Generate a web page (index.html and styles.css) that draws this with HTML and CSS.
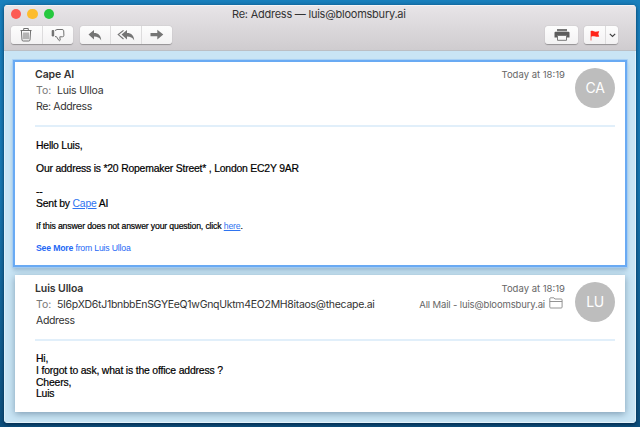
FILE: index.html
```html
<!DOCTYPE html>
<html lang="en">
<head>
<meta charset="utf-8">
<title>Re: Address</title>
<link rel="stylesheet" href="styles.css">
</head>
<body>
<main class="window">
  <header class="titlebar">
    <div class="title-row">
      <div class="lights"><i class="light red"></i><i class="light yellow"></i><i class="light green"></i></div>
      <h1 class="title"><span>Re: Address — luis@bloomsbury.ai</span></h1>
    </div>
    <div class="toolbar">
      <div class="group trash-group">
        <button aria-label="Delete"><svg width="14" height="16" viewBox="0 0 14 16" fill="none" stroke="#707070" stroke-width="1"><path d="M1.5 3.5h11M4.7 3.2V1.500h4.600v1.700M2.400 3.700l.6 9.200q.1 1.100 1.200 1.100h5.600q1.100 0 1.200-1.100l.6-9.200M5 5.500v6.700M7 5.500v6.700M9 5.500v6.700"/></svg></button>
        <button aria-label="Junk"><svg width="14" height="14" viewBox="0 0 14 14" fill="none" stroke="#707070"><path d="M1.200 2.500h1.500v5.500H1.200z" fill="#555"/><path d="M4 2.500l2-1h5q1.500 0 1.700 1.200l.2 4.600q0 1.500-1.500 1.500H8.800l.4 3.400q-.5 1-1.400.1L5.400 8.600H4"/></svg></button>
      </div>
      <div class="group reply-group">
        <button aria-label="Reply"><svg width="14" height="13" viewBox="0 0 14 13" fill="#757575"><path d="M.5 5.600L6 1v3c4.500 0 7 2.600 7.200 7.500C11.500 8.700 9.500 7.600 6 7.600v2.900z"/></svg></button>
        <button aria-label="Reply all"><svg width="18" height="13" viewBox="0 0 18 13" fill="#757575"><path d="M4.500 5.600L10 1v3c4.500 0 7 2.600 7.200 7.500C15.500 8.700 13.500 7.600 10 7.600v2.900z"/><path d="M6.500 1.400L1.300 5.600l5.200 4.400" fill="none" stroke="#757575" stroke-width="1.200"/></svg></button>
        <button aria-label="Forward"><svg width="14" height="12" viewBox="0 0 14 12" fill="#757575"><path d="M.5 4h6.800V.8l6 4.800-6 4.800V7.200H.5z"/></svg></button>
      </div>
      <div class="group print-group">
        <button aria-label="Print"><svg width="16" height="14" viewBox="0 0 16 14"><path d="M3 1h10v2.200H3z" fill="#777"/><path d="M1.500 3.800h13q1 0 1 1v4.700H.5V4.800q0-1 1-1z" fill="#5c5c5c"/><path d="M3.500 7.500h9v4.800h-9z" fill="#f8f8f8" stroke="#777"/></svg></button>
      </div>
      <div class="group flag-group">
        <button aria-label="Flag"><svg width="10" height="11" viewBox="0 0 10 11"><path d="M1 1v9.500" stroke="#f5665e"/><path d="M1 1c2-1 3 .8 4.500.7S8 1 9.200 1.200L8.300 4l.9 2.500c-1.500.7-2.700.2-4 0S2.500 6 1 6.800z" fill="#ff2419"/></svg></button>
        <button aria-label="Flag options"><svg width="7" height="5" viewBox="0 0 7 5" fill="none" stroke="#444" stroke-width="1.200"><path d="M.8.8l2.700 2.700L6.200.8"/></svg></button>
      </div>
    </div>
  </header>
  <section class="messages">
    <article class="message selected">
      <div class="head">
        <div class="who">
          <p class="name"><span>Cape AI</span></p>
          <p><span class="label">To:</span><span class="to1">Luis Ulloa</span></p>
          <p><span class="subj">Re: Address</span></p>
        </div>
        <div class="meta"><p><span class="time">Today at 18:19</span></p></div>
        <div class="avatar">CA</div>
      </div>
      <div class="body">
        <p>Hello Luis,</p><br>
        <p>Our address is *20 Ropemaker Street* , London EC2Y 9AR</p><br>
        <p>--</p>
        <p>Sent by <a href="#">Cape</a> AI</p>
        <p class="small"><span>If this answer does not answer your question, click <a href="#">here</a>.</span></p>
        <p class="more"><b>See More</b> from Luis Ulloa</p>
      </div>
    </article>
    <article class="message second">
      <div class="head">
        <div class="who">
          <p class="name"><span>Luis Ulloa</span></p>
          <p><span class="label">To:</span><span class="to2">5I6pXD6tJ1bnbbEnSGYEeQ1wGnqUktm4EO2MH8itaos@thecape.ai</span></p>
          <p><span class="subj">Address</span></p>
        </div>
        <div class="meta">
          <p><span class="time">Today at 18:19</span></p>
          <p class="mailbox"><span>All Mail - luis@bloomsbury.ai</span><svg width="14" height="12" viewBox="0 0 14 12" fill="none" stroke="#888" stroke-width=".9"><path d="M.8 10V1.700q0-.9.900-.9h3.200l1 1.200h6.300q.9 0 .9.900V10q0 1-.9 1H1.700q-.9 0-.9-1zM.8 4.500h12.300"/></svg></p>
        </div>
        <div class="avatar">LU</div>
      </div>
      <div class="body">
        <p>Hi,</p>
        <p>I forgot to ask, what is the office address ?</p>
        <p>Cheers,</p>
        <p>Luis</p>
      </div>
    </article>
  </section>
</main>
</body>
</html>
```
FILE: styles.css
```css
* { box-sizing: border-box; }
body {
  margin: 0; width: 640px; height: 427px; overflow: hidden;
  padding: 5px 4px 4px;
  background: linear-gradient(#1980bd, #1777b0 45%, #0d4f7c);
  font-family: Inter, "Liberation Sans", sans-serif;
}
p, h1 { margin: 0; }
.window {
  height: 418px; border-radius: 4px; overflow: hidden;
  background: #c9e5f5;
  box-shadow: 0 0 4px rgba(0,35,65,.4), 0 2px 3px rgba(0,30,60,.5);
}
.titlebar {
  height: 46px; background: linear-gradient(#e8e5e8, #cfcccf);
  border-bottom: 1px solid #bcbfc4; box-shadow: inset 0 1px #f5f3f5;
}
.title-row { display: flex; height: 20px; }
.lights { display: flex; gap: 6.600px; padding: 4px 0 0 6.700px; width: 80px; }
.light { width: 10.200px; height: 10.200px; border-radius: 50%; }
.red { background: #fc5b54; }
.yellow { background: #fdbc2c; }
.green { background: #25c83e; }
.title { flex: 1; padding-left: 148px; font-size: 11px; font-weight: 400; line-height: 19px; letter-spacing: -.24px; color: #333; white-space: nowrap; }
.toolbar { display: flex; padding-left: 7px; }
.group {
  display: flex; height: 18px; margin-top: 1px; border-radius: 3px;
  background: linear-gradient(#fdfdfd, #f3f2f3); box-shadow: 0 .5px 1px rgba(0,0,0,.3);
}
button {
  flex: 1; display: flex; align-items: center; justify-content: center;
  padding: 0; border: 0; background: none;
}
button + button { border-left: 1px solid #dddcdd; }
.trash-group { width: 62px; }
.reply-group { width: 92px; margin-left: 7px; }
.print-group { width: 33px; margin-left: 373px; }
.flag-group { width: 34px; margin-left: 6px; }
.flag-group button:first-child { flex: 0 0 21px; }
.messages { padding: 9px 9px 11px; height: 372px; box-shadow: inset 1px 0 #dceff9, inset -1px -1px #e3f2fa; }
.message { background: #fff; color: #333; }
.selected { height: 207px; padding: 5px 10px 0 20px; border: 2px solid #69aaf3; box-shadow: 0 0 0 .8px #a2ccf6, 0 3px 4px rgba(40,80,120,.3); }
.second { height: 137px; margin: 8px 2px 0; padding: 6px 10px 0 20px; box-shadow: 0 2px 7px rgba(40,70,100,.45); }
.head { display: flex; height: 60px; border-bottom: 2px solid #e1effa; font-size: 10.500px; line-height: 16px; white-space: nowrap; }
.who { flex: 1; }
.name { font-weight: 600; letter-spacing: -.1px; }
.label { display: inline-block; width: 22px; padding-left: 1px; color: #777; }
.to1 { letter-spacing: -.2px; }
.to2 { letter-spacing: -.29px; }
.subj { padding-left: 1px; letter-spacing: -.35px; }
.meta { color: #666; font-size: 9.500px; text-align: right; margin-right: 10px; }
.mailbox { display: flex; justify-content: flex-end; gap: 4px; padding-right: 2px; letter-spacing: -.14px; }
.avatar {
  width: 40px; height: 40px; border-radius: 50%; margin-top: 1px;
  background: #bdbdbd; color: #fff; font-size: 14px; line-height: 40px; letter-spacing: -.4px; text-align: center;
}
.body {
  padding: 13px 0 0 1px; color: #000; white-space: nowrap;
  font: 10.400px/11.600px "Liberation Sans", sans-serif;
  letter-spacing: -.2px; -webkit-text-stroke: .2px;
}
.second .body { padding-top: 12px; line-height: 11.800px; letter-spacing: -.17px; }
.body a { color: #2f74f0; text-decoration: underline; -webkit-text-stroke: 0; }
.body .small { margin-top: 11.500px; font-size: 8.700px; letter-spacing: -.16px; }
.body .more { margin-top: 10px; font-size: 8.700px; letter-spacing: -.18px; color: #2468f5; -webkit-text-stroke: 0; }
```
